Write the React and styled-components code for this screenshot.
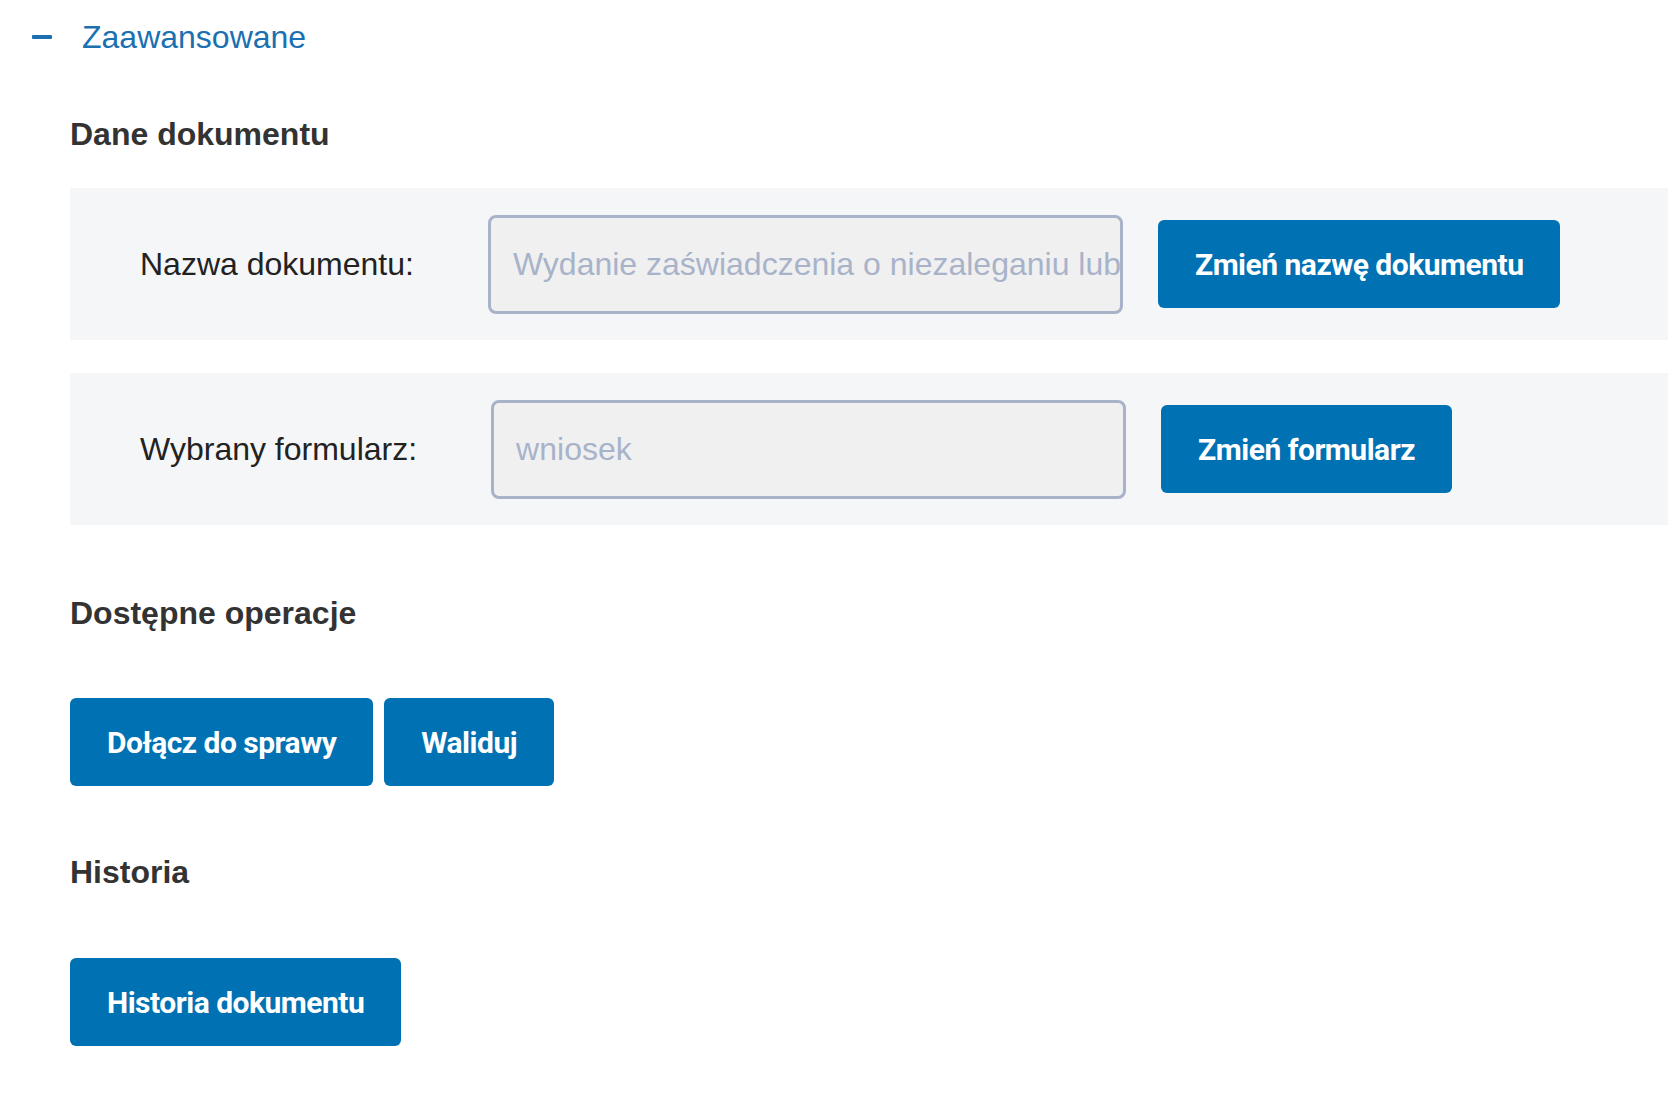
import React from 'react';
import styled, { createGlobalStyle } from 'styled-components';

const GlobalStyle = createGlobalStyle`
  body {
    margin: 0;
    background: #fff;
    font-family: 'Liberation Sans', Arial, sans-serif;
    color: #333;
  }
`;

const Page = styled.div`
  padding: 12px 0 0 0;
`;

const Toggle = styled.div`
  display: flex;
  align-items: center;
  height: 50px;
  padding-left: 32px;
  gap: 30px;
  color: #1a70b1;
  font-size: 32px;
`;

const Minus = styled.span`
  display: block;
  width: 20px;
  height: 4px;
  border-radius: 1px;
  background: #1a70b1;
`;

const Section = styled.section`
  padding-left: 70px;
`;

const Heading = styled.h2`
  margin: 0;
  font-size: 32px;
  font-weight: bold;
  color: #333;
  line-height: 40px;
  padding: ${p => p.pad || '0'};
`;

const FieldRow = styled.div`
  display: flex;
  align-items: center;
  height: 152px;
  background: #f5f6f8;
  padding-left: 70px;
  margin-bottom: ${p => p.mb || '0'};
`;

const Label = styled.label`
  font-size: 32px;
  color: #222;
  margin-right: 74px;
  white-space: nowrap;
`;

const Input = styled.input`
  box-sizing: border-box;
  width: 635px;
  height: 99px;
  border: 3px solid #a8b3ca;
  border-radius: 8px;
  background: #f0f0f0;
  padding: 0 0 0 22px;
  font-family: 'Liberation Sans', Arial, sans-serif;
  font-size: 32px;
  color: #a8b3ca;
  outline: none;
  margin-right: 35px;
`;

const Button = styled.button`
  box-sizing: border-box;
  height: 88px;
  padding: 0 37px;
  border: none;
  border-radius: 6px;
  background: #0071b3;
  color: #fff;
  font-family: Roboto, 'Liberation Sans', sans-serif;
  font-weight: 700;
  font-size: 30px;
  letter-spacing: -0.5px;
  cursor: pointer;
`;

const ButtonRow = styled.div`
  display: flex;
  gap: 11px;
  padding: ${p => p.pad || '0'};
`;

export default function App() {
  return (
    <Page>
      <GlobalStyle />
      <Toggle>
        <Minus />
        <span>Zaawansowane</span>
      </Toggle>
      <Section>
        <Heading pad="52px 0 34px 0">Dane dokumentu</Heading>
        <FieldRow mb="33px">
          <Label>Nazwa dokumentu:</Label>
          <Input
            readOnly
            value="Wydanie zaświadczenia o niezaleganiu lub zaleganiu w podatkach"
          />
          <Button>Zmień nazwę dokumentu</Button>
        </FieldRow>
        <FieldRow>
          <Label>Wybrany formularz:</Label>
          <Input readOnly value="wniosek" />
          <Button>Zmień formularz</Button>
        </FieldRow>
        <Heading pad="68px 0 0 0">Dostępne operacje</Heading>
        <ButtonRow pad="65px 0 0 0">
          <Button>Dołącz do sprawy</Button>
          <Button>Waliduj</Button>
        </ButtonRow>
        <Heading pad="66px 0 0 0">Historia</Heading>
        <ButtonRow pad="66px 0 0 0">
          <Button>Historia dokumentu</Button>
        </ButtonRow>
      </Section>
    </Page>
  );
}
